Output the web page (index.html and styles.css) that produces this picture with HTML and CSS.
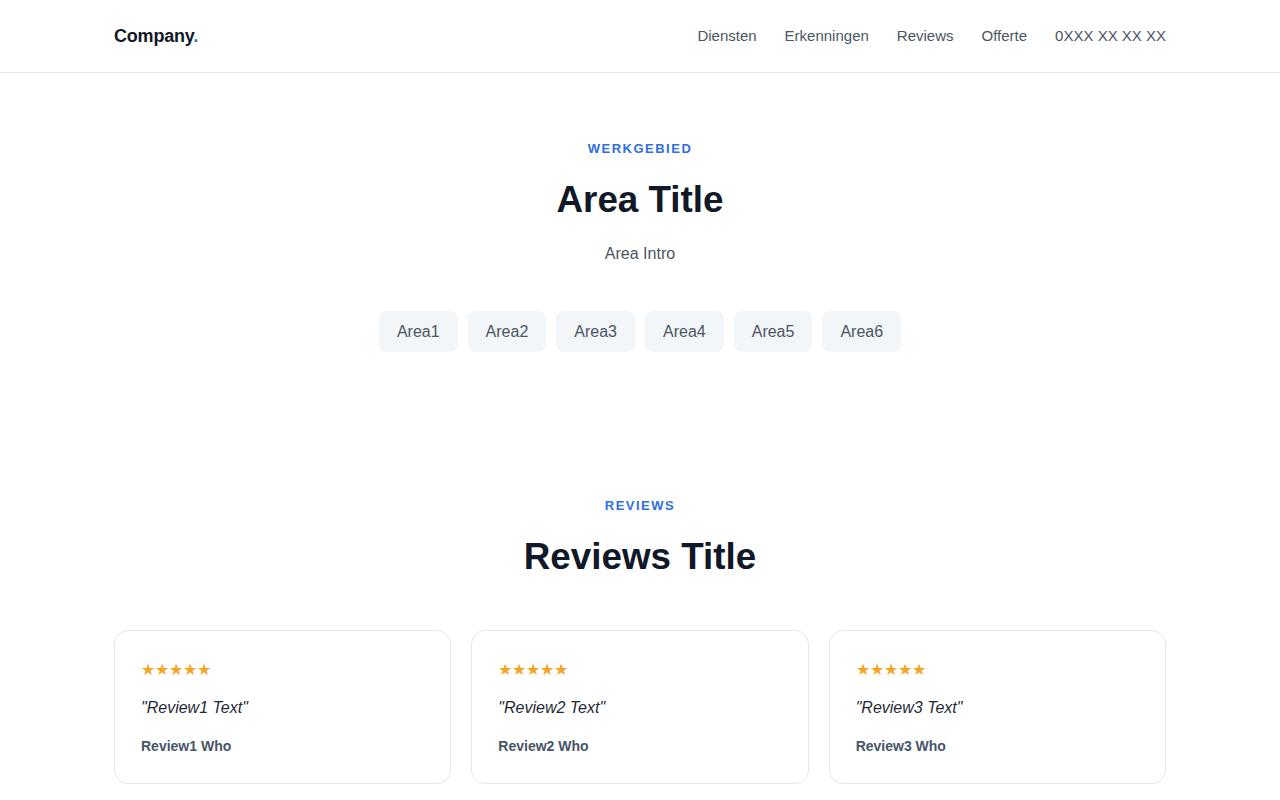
FILE: index.html
```html
<!DOCTYPE html>
<html lang="nl">
<head>
<meta charset="utf-8">
<title>Company</title>
<link rel="stylesheet" href="styles.css">
</head>
<body>
<header class="site-header">
  <div class="container header-inner">
    <div class="logo">Company<span class="dot">.</span></div>
    <nav class="nav">
      <a href="#">Diensten</a>
      <a href="#">Erkenningen</a>
      <a href="#">Reviews</a>
      <a href="#">Offerte</a>
      <a href="#">0XXX XX XX XX</a>
    </nav>
  </div>
</header>
<main>
  <section class="section area">
    <div class="container center">
      <div class="eyebrow">WERKGEBIED</div>
      <h2 class="title">Area Title</h2>
      <p class="intro">Area Intro</p>
      <div class="chips">
        <span class="chip">Area1</span>
        <span class="chip">Area2</span>
        <span class="chip">Area3</span>
        <span class="chip">Area4</span>
        <span class="chip">Area5</span>
        <span class="chip">Area6</span>
      </div>
    </div>
  </section>
  <section class="section reviews">
    <div class="container">
      <div class="center">
        <div class="eyebrow">REVIEWS</div>
        <h2 class="title">Reviews Title</h2>
      </div>
      <div class="cards">
        <div class="card">
          <div class="stars">★★★★★</div>
          <p class="quote">"Review1 Text"</p>
          <div class="who">Review1 Who</div>
        </div>
        <div class="card">
          <div class="stars">★★★★★</div>
          <p class="quote">"Review2 Text"</p>
          <div class="who">Review2 Who</div>
        </div>
        <div class="card">
          <div class="stars">★★★★★</div>
          <p class="quote">"Review3 Text"</p>
          <div class="who">Review3 Who</div>
        </div>
      </div>
    </div>
  </section>
</main>
</body>
</html>
```
FILE: styles.css
```css
* { box-sizing: border-box; }
html, body { margin: 0; padding: 0; }
body {
  font-family: "Liberation Sans", Arial, sans-serif;
  color: #111827;
  background: #fff;
}
.container {
  max-width: 1100px;
  margin: 0 auto;
  padding: 0 24px;
}
.center { text-align: center; }
.site-header {
  height: 73px;
  border-bottom: 1px solid #e5e7eb;
}
.header-inner {
  height: 72px;
  display: flex;
  align-items: center;
  justify-content: space-between;
}
.logo {
  font-size: 18px;
  line-height: 24px;
  font-weight: 700;
  color: #111827;
  letter-spacing: -0.2px;
}
.logo .dot { color: #2f6fdf; }
.nav {
  display: flex;
  gap: 28px;
  margin-top: -1px;
}
.nav a {
  font-size: 15px;
  line-height: 22px;
  color: #4b5563;
  text-decoration: none;
}
.area { padding: 66px 0 71px; }
.reviews { padding: 73px 0 40px; }
.eyebrow {
  font-size: 13px;
  line-height: 20px;
  font-weight: 700;
  letter-spacing: 1.5px;
  color: #2f6fdf;
}
.title {
  margin: 17px 0 0;
  font-size: 36.8px;
  line-height: 48px;
  font-weight: 700;
  color: #111827;
}
.intro {
  margin: 18px 0 0;
  font-size: 16px;
  line-height: 24px;
  color: #4b5563;
}
.chips {
  margin-top: 45px;
  display: flex;
  justify-content: center;
  gap: 10px;
}
.chip {
  display: inline-block;
  padding: 10px 18px;
  line-height: 21px;
  font-size: 16px;
  color: #4b5563;
  background: #f3f6f9;
  border-radius: 8px;
}
.cards {
  margin-top: 49px;
  display: grid;
  grid-template-columns: repeat(3, 1fr);
  gap: 20px;
}
.card {
  border: 1px solid #e5e7eb;
  border-radius: 14px;
  padding: 27px 26px 27px 26px;
  background: #fff;
}
.stars {
  font-size: 16px;
  line-height: 24px;
  color: #f5a524;
}
.quote {
  margin: 13px 0 0;
  font-size: 16px;
  line-height: 26px;
  font-style: italic;
  color: #1f2937;
}
.who {
  margin-top: 15px;
  font-size: 14px;
  line-height: 20px;
  font-weight: 700;
  color: #475569;
}
```
